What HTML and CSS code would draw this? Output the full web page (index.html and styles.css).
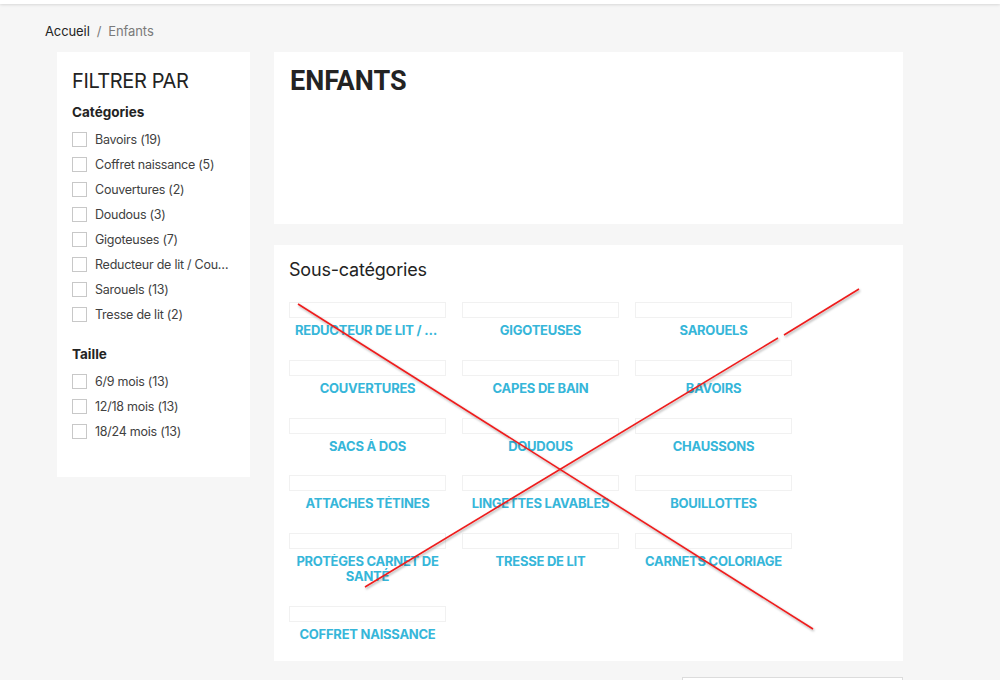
FILE: index.html
```html
<!DOCTYPE html>
<html lang="fr">
<head>
<meta charset="utf-8">
<title>Enfants</title>
<link rel="stylesheet" href="styles.css">
</head>
<body>
<header class="topbar"></header>
<div class="page">
  <nav class="breadcrumb"><a class="crumb-link">Accueil</a><span class="sep">/</span><span class="crumb-current">Enfants</span></nav>
  <div class="layout">
    <aside class="filters">
      <h2 class="filters-title">FILTRER PAR</h2>
      <h3 class="facet-title">Catégories</h3>
      <ul class="facet-list">
        <li class="facet-item"><span class="check"></span><span class="facet-label">Bavoirs (19)</span></li>
        <li class="facet-item"><span class="check"></span><span class="facet-label">Coffret naissance (5)</span></li>
        <li class="facet-item"><span class="check"></span><span class="facet-label">Couvertures (2)</span></li>
        <li class="facet-item"><span class="check"></span><span class="facet-label">Doudous (3)</span></li>
        <li class="facet-item"><span class="check"></span><span class="facet-label">Gigoteuses (7)</span></li>
        <li class="facet-item"><span class="check"></span><span class="facet-label">Reducteur de lit / Couffin (4)</span></li>
        <li class="facet-item"><span class="check"></span><span class="facet-label">Sarouels (13)</span></li>
        <li class="facet-item"><span class="check"></span><span class="facet-label">Tresse de lit (2)</span></li>
      </ul>
      <h3 class="facet-title facet-gap">Taille</h3>
      <ul class="facet-list">
        <li class="facet-item"><span class="check"></span><span class="facet-label">6/9 mois (13)</span></li>
        <li class="facet-item"><span class="check"></span><span class="facet-label">12/18 mois (13)</span></li>
        <li class="facet-item"><span class="check"></span><span class="facet-label">18/24 mois (13)</span></li>
      </ul>
    </aside>
    <main class="content">
      <section class="card category-header">
        <h1 class="category-title">ENFANTS</h1>
      </section>
      <section class="card subcategories">
        <h2 class="sub-title">Sous-catégories</h2>
        <ul class="sub-grid">
          <li class="sub-item"><span class="sub-img"></span><span class="sub-name">Reducteur de lit / Couffin</span></li>
          <li class="sub-item"><span class="sub-img"></span><span class="sub-name">Gigoteuses</span></li>
          <li class="sub-item"><span class="sub-img"></span><span class="sub-name">Sarouels</span></li>
          <li class="sub-item"><span class="sub-img"></span><span class="sub-name">Couvertures</span></li>
          <li class="sub-item"><span class="sub-img"></span><span class="sub-name">Capes de bain</span></li>
          <li class="sub-item"><span class="sub-img"></span><span class="sub-name">Bavoirs</span></li>
          <li class="sub-item"><span class="sub-img"></span><span class="sub-name">Sacs à dos</span></li>
          <li class="sub-item"><span class="sub-img"></span><span class="sub-name">Doudous</span></li>
          <li class="sub-item"><span class="sub-img"></span><span class="sub-name">Chaussons</span></li>
          <li class="sub-item"><span class="sub-img"></span><span class="sub-name">Attaches tétines</span></li>
          <li class="sub-item"><span class="sub-img"></span><span class="sub-name">Lingettes lavables</span></li>
          <li class="sub-item"><span class="sub-img"></span><span class="sub-name">Bouillottes</span></li>
          <li class="sub-item"><span class="sub-img"></span><span class="sub-name wrap">Protèges carnet de santé</span></li>
          <li class="sub-item"><span class="sub-img"></span><span class="sub-name">Tresse de lit</span></li>
          <li class="sub-item"><span class="sub-img"></span><span class="sub-name">Carnets coloriage</span></li>
          <li class="sub-item"><span class="sub-img"></span><span class="sub-name">Coffret naissance</span></li>
        </ul>
      </section>
      <div class="sort-row"><div class="sort-select"></div></div>
    </main>
  </div>
</div>
<svg class="annotation" width="1000" height="680" viewBox="0 0 1000 680" xmlns="http://www.w3.org/2000/svg">
  <defs>
    <filter id="sh" x="-5%" y="-5%" width="110%" height="110%">
      <feDropShadow dx="1" dy="1.5" stdDeviation="0.8" flood-color="#000" flood-opacity="0.35"/>
    </filter>
  </defs>
  <g stroke="#ee1c1c" stroke-width="1.6" fill="none" filter="url(#sh)">
    <line x1="298" y1="304" x2="813" y2="629"/>
    <line x1="859" y1="289" x2="784" y2="335"/>
    <line x1="778" y1="338" x2="365" y2="587"/>
  </g>
</svg>
</body>
</html>
```

FILE: styles.css
```css
* { box-sizing: border-box; }
html, body { margin: 0; padding: 0; }
body {
  background: #f6f6f6;
  font-family: Inter, "Noto Sans", "Liberation Sans", sans-serif;
  color: #232323;
  width: 1000px;
  height: 680px;
  overflow: hidden;
  position: relative;
}
ul { list-style: none; margin: 0; padding: 0; }
h1, h2, h3 { margin: 0; }

.topbar {
  height: 4px;
  background: #fff;
  box-shadow: 0 1px 3px rgba(0,0,0,0.12);
}

.page { padding-left: 45px; }

.breadcrumb {
  height: 48px;
  padding-top: 19px;
  font-size: 13px;
  line-height: 16px;
  letter-spacing: -0.1px;
}
.crumb-link { color: #232323; }
.sep { color: #7a7a7a; margin: 0 7px; }
.crumb-current { color: #7a7a7a; }

.layout {
  display: flex;
  align-items: flex-start;
  gap: 24px;
  padding-left: 12px;
}

.filters {
  width: 193px;
  background: #fff;
  padding: 17px 15px 33px 15px;
}
.filters-title {
  font-size: 20px;
  line-height: 24px;
  font-weight: 400;
  letter-spacing: -0.4px;
  color: #232323;
  margin-bottom: 9px;
}
.facet-title {
  font-size: 13.5px;
  line-height: 20px;
  font-weight: 700;
  color: #232323;
  margin-bottom: 5px;
}
.facet-gap { margin-top: 17px; }
.facet-item {
  display: flex;
  align-items: center;
  height: 25px;
}
.check {
  flex: none;
  width: 15px;
  height: 15px;
  border: 1px solid #c8c8c8;
  background: #fff;
  margin-right: 8px;
}
.facet-label {
  max-width: 136px;
  font-size: 12.5px;
  letter-spacing: -0.25px;
  color: #414141;
  white-space: nowrap;
  overflow: hidden;
  text-overflow: ellipsis;
}

.content { width: 629px; }
.card { background: #fff; }
.category-header {
  height: 172px;
  padding: 13px 16px;
  margin-bottom: 21px;
}
.category-title {
  font-family: Roboto, "Liberation Sans", sans-serif;
  font-size: 27px;
  line-height: 32px;
  font-weight: 700;
  color: #232323;
}
.subcategories {
  padding: 13px 16px 19px 15px;
}
.sub-title {
  font-size: 18px;
  line-height: 24px;
  font-weight: 400;
  letter-spacing: -0.2px;
  color: #232323;
  margin-bottom: 20px;
}
.sub-grid {
  display: grid;
  grid-template-columns: repeat(3, 157px);
  column-gap: 16px;
  row-gap: 21.8px;
}
.sub-item {
  display: flex;
  flex-direction: column;
  align-items: center;
}
.sub-img {
  width: 157px;
  height: 16px;
  border: 1px solid #f1f1f1;
  margin-bottom: 5px;
}
.sub-name {
  width: 157px;
  text-align: center;
  font-size: 13px;
  line-height: 15px;
  font-weight: 700;
  letter-spacing: -0.25px;
  text-transform: uppercase;
  color: #36b6d9;
  white-space: nowrap;
  overflow: hidden;
  text-overflow: ellipsis;
  padding: 0 6px;
}
.sub-name.wrap { white-space: normal; padding: 0 6px; }

.sort-row {
  display: flex;
  justify-content: flex-end;
  padding-top: 16px;
}
.sort-select {
  width: 221px;
  height: 30px;
  background: #fff;
  border: 1px solid #dcdcdc;
}

.annotation {
  position: absolute;
  left: 0;
  top: 0;
  pointer-events: none;
}
```
